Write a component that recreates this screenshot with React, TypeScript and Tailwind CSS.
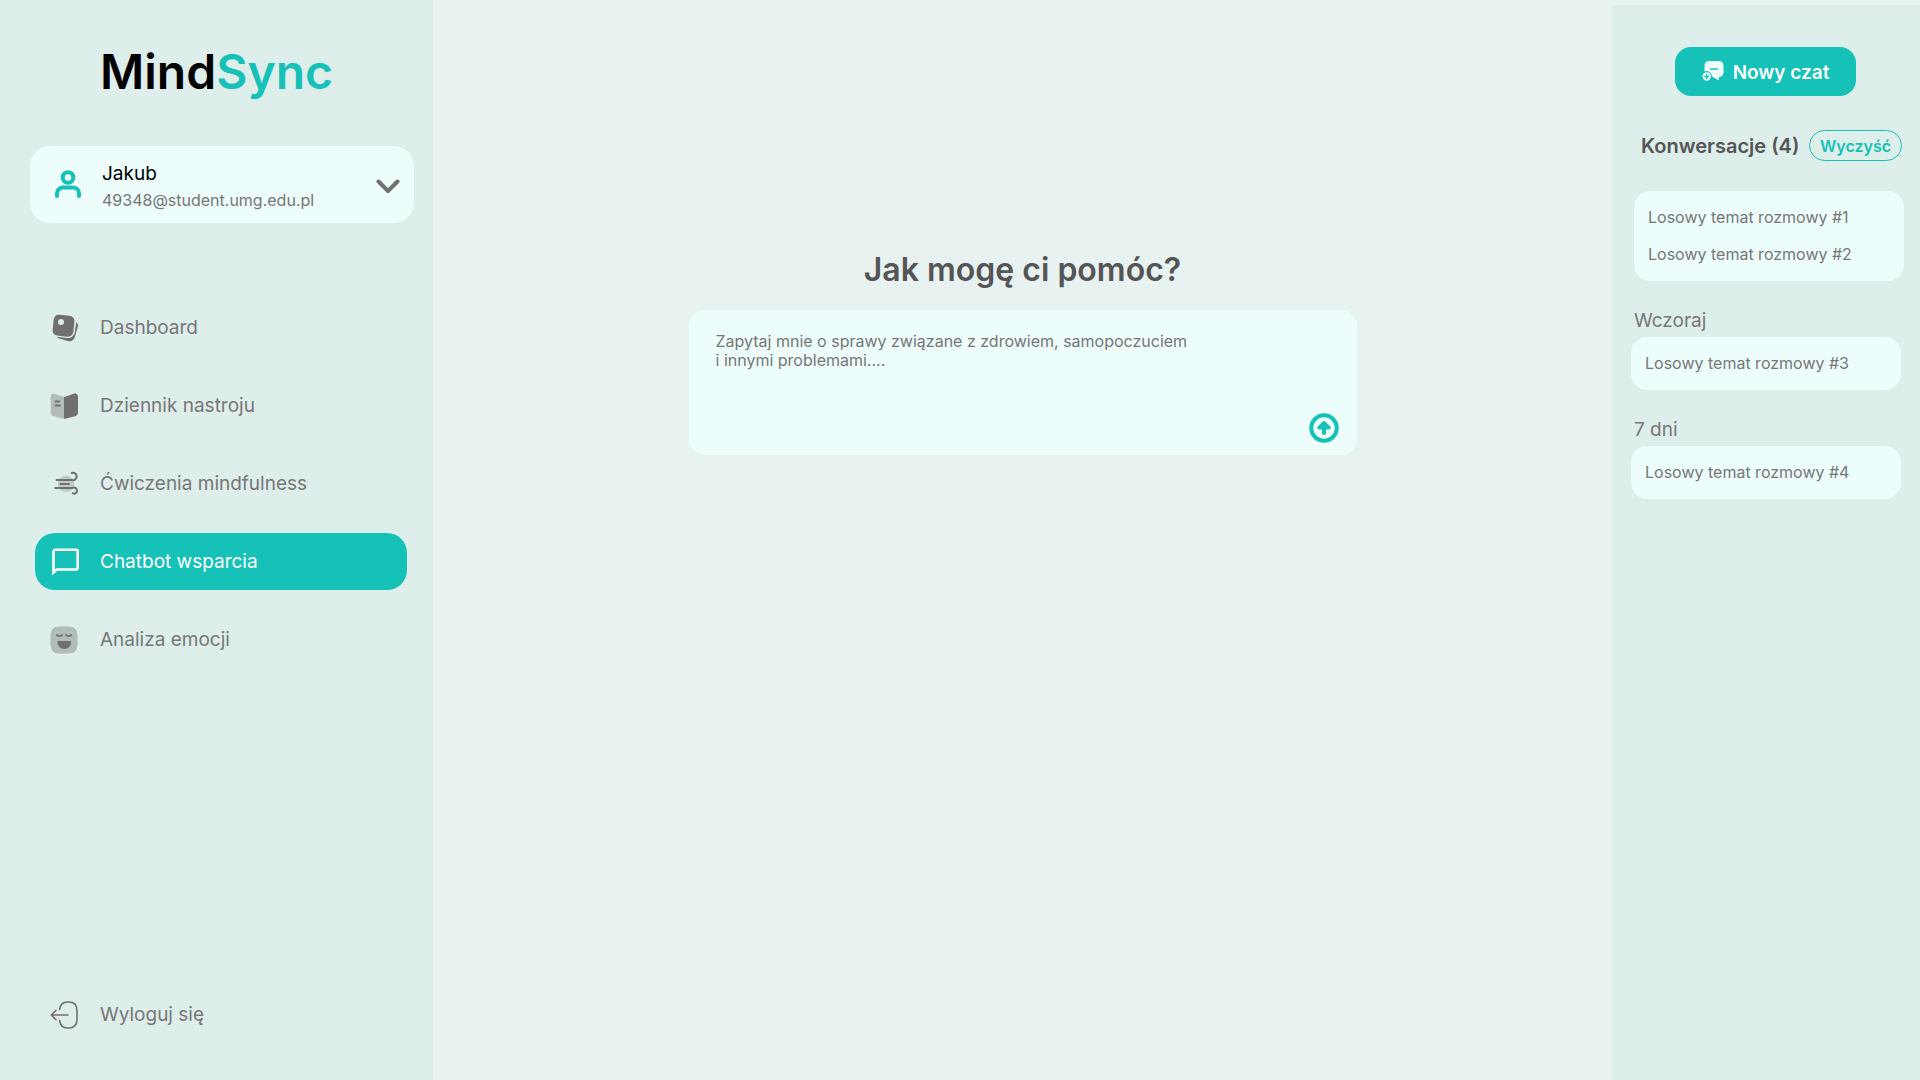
import type { ReactNode } from 'react';

function UserIcon() {
  return (
    <svg width="28" height="30" viewBox="0 0 28 30" fill="none" stroke="currentColor" strokeWidth="4" strokeLinecap="round" aria-hidden="true">
      <circle cx="14" cy="7.500" r="5.300" />
      <path d="M3 26v-2.500a6 6 0 0 1 6-6h10a6 6 0 0 1 6 6V26" />
    </svg>
  );
}

function ChevronIcon() {
  return (
    <svg width="24" height="15" viewBox="0 0 24 15" fill="none" stroke="currentColor" strokeWidth="4" strokeLinecap="round" strokeLinejoin="round" aria-hidden="true">
      <path d="M2.500 2.500 12 12l9.500-9.500" />
    </svg>
  );
}

function DashboardIcon() {
  return (
    <svg width="30" height="30" viewBox="0 0 30 30" fill="currentColor" aria-hidden="true">
      <path
        fillRule="evenodd"
        d="M9.800 1.700 19 2.700C22.500 3.100 24.700 5.200 24.400 8.500L23.500 17.800C23.100 21.800 20.900 24.100 17 23.700L8 22.700C4.200 22.300 2.300 20.200 2.700 16.600L3.600 7C4 3.200 6.300 1.300 9.800 1.700ZM11 6a3 3 0 1 0 0 6 3 3 0 0 0 0-6Z"
      />
      <path d="M26.300 9 27.800 11C28.200 12 28 13 27.700 14L25 23.500C23.900 27.300 21.500 29 17.500 28L10 25.800C8.700 25.400 7.500 24.700 6.600 23.800L16.500 25C21.700 25.500 24.400 22.800 25 17.800Z" />
    </svg>
  );
}

function JournalIcon() {
  return (
    <svg width="30" height="30" viewBox="0 0 30 30" fill="currentColor" aria-hidden="true">
      <path opacity="0.4" d="M14 6.200 5 3C2.200 2 .7 3.200.7 6v15.500c0 2 1 3 2.800 3.500L14 28Z" />
      <path d="M14 6.200 23.500 2.700C26.300 1.800 28 3 28 5.800v15.800c0 2-1 3.100-2.800 3.600L14 28Z" />
      <path fill="none" stroke="currentColor" strokeWidth="1.800" strokeLinecap="round" d="M5.500 10.500h3.600M5.500 14.500h4.500" />
    </svg>
  );
}

function WindIcon() {
  return (
    <svg width="30" height="30" viewBox="0 0 30 30" fill="none" stroke="currentColor" strokeWidth="2" strokeLinecap="round" aria-hidden="true">
      <circle cx="16" cy="15" r="8.200" fill="currentColor" stroke="none" opacity="0.28" />
      <path d="M6.500 11H22a3.700 3.700 0 1 0-.3-7M10.500 15h8.500M5.200 19H22.500a3 3 0 1 1 .2 5.300" />
    </svg>
  );
}

function ChatIcon() {
  return (
    <svg width="30" height="30" viewBox="0 0 30 30" fill="none" stroke="currentColor" strokeWidth="2.600" strokeLinejoin="miter" aria-hidden="true">
      <path d="M3.500 25.500V4.500A1.700 1.700 0 0 1 5.200 2.800H26A1.700 1.700 0 0 1 27.700 4.500v16.300a1.700 1.700 0 0 1-1.700 1.700H6.700Z" />
    </svg>
  );
}

function EmojiIcon() {
  return (
    <svg width="30" height="30" viewBox="0 0 30 30" fill="currentColor" aria-hidden="true">
      <rect x="0.500" y="1.500" width="27" height="27" rx="8" opacity="0.4" />
      <path d="M8.500 16h11.500c.8 0 1.200.5 1.200 1.200a6.900 6.900 0 0 1-13.800 0c0-.7.400-1.200 1.100-1.200Z" />
      <path fill="none" stroke="currentColor" strokeWidth="1.800" strokeLinecap="round" d="M6.800 10c1.800 1.500 3.600 1.500 5.400 0M16 10c1.800 1.500 3.600 1.500 5.400 0" />
    </svg>
  );
}

function LogoutIcon() {
  return (
    <svg width="30" height="30" viewBox="0 0 30 30" fill="none" stroke="currentColor" strokeWidth="1.600" strokeLinecap="round" strokeLinejoin="round" aria-hidden="true">
      <path d="M9.700 9.500C10.200 4 12.500 2 17.500 2h1c6 0 8.500 2.500 8.500 8.500v9c0 6-2.500 8.500-8.500 8.500h-1c-5 0-7.300-2-7.800-7.400M18 15H1.500M6 10.300 1.300 15 6 19.700" />
    </svg>
  );
}

function NewChatIcon() {
  return (
    <svg width="22" height="22" viewBox="0 1 22 22" fill="none" aria-hidden="true">
      <path fill="#ecfdfb" d="M7 1h10a4.500 4.500 0 0 1 4.500 4.500v7A4.500 4.500 0 0 1 17 17v2.300c0 .6-.6.900-1.100.6L9.500 16A5 5 0 0 0 2.500 11.500v-6A4.500 4.500 0 0 1 7 1Z" />
      <path stroke="#16c1b8" strokeWidth="1.600" strokeLinecap="round" d="M8.500 9h7" />
      <circle cx="4.700" cy="16.500" r="5" fill="#16c1b8" />
      <circle cx="4.700" cy="16.500" r="4.200" fill="#ecfdfb" />
      <path stroke="#16c1b8" strokeWidth="1.600" strokeLinecap="round" d="M4.700 14.800v3.400M3 16.500h3.400" />
    </svg>
  );
}

function SendIcon() {
  return (
    <svg width="30" height="30" viewBox="0 0 30 30" fill="none" stroke="currentColor" strokeWidth="4" strokeLinecap="round" strokeLinejoin="round" aria-hidden="true">
      <circle cx="15" cy="15" r="12.700" />
      <path d="M15 10.500V20" />
      <path strokeWidth="3.500" fill="currentColor" d="M10 14.800 15 9.800l5 5Z" />
    </svg>
  );
}

function NavItem({ icon, label, active = false }: { icon: ReactNode; label: string; active?: boolean }) {
  return (
    <a
      href="#"
      aria-current={active ? 'page' : undefined}
      className={
        active
          ? 'flex h-[57px] items-center gap-5 rounded-[20px] bg-[#16c1b8] px-[15px] text-[19px] leading-7 text-white'
          : 'flex h-[57px] items-center gap-5 rounded-[20px] px-[15px] text-[19px] leading-7 text-[#707070]'
      }
    >
      {icon}
      <span className={active ? 'text-white' : 'text-[#777777]'}>{label}</span>
    </a>
  );
}

function Group({ title, topic }: { title: string; topic: string }) {
  return (
    <section>
      <h3 className="ml-[3px] pt-0.5 text-[19px] leading-7 text-[#777777]">{title}</h3>
      <ul className="mt-0.5 rounded-2xl bg-[#ecfdfb] px-[14px] py-[14px]">
        <li><a href="#" className="block leading-[25px] text-[#777777]">{topic}</a></li>
      </ul>
    </section>
  );
}

export default function App() {
  return (
    <div className="flex min-h-screen bg-[#e8f2f1] font-['Inter',sans-serif]">
      <aside className="flex w-[433px] shrink-0 flex-col bg-[#deeeea] pb-[37px]">
        <h1 className="mt-[42px] text-center text-5xl leading-[60px] font-semibold text-black">
          Mind<span className="text-[#16c1b8]">Sync</span>
        </h1>
        <button type="button" className="mt-11 mr-[19px] ml-[30px] flex h-[77px] items-center rounded-[20px] bg-[#ecfdfb] pr-[14px] pl-6 text-left">
          <span className="text-[#16c1b8]"><UserIcon /></span>
          <span className="ml-5 flex-1">
            <span className="block pt-0.5 text-[19px] leading-7 text-black">Jakub</span>
            <span className="block text-base leading-6 text-[#777777]">49348@student.umg.edu.pl</span>
          </span>
          <span className="mt-1 text-[#707070]"><ChevronIcon /></span>
        </button>
        <nav className="mt-[76px] mr-[26px] ml-[35px] flex flex-1 flex-col gap-[21px]" aria-label="Menu">
          <NavItem icon={<DashboardIcon />} label="Dashboard" />
          <NavItem icon={<JournalIcon />} label="Dziennik nastroju" />
          <NavItem icon={<WindIcon />} label="Ćwiczenia mindfulness" />
          <NavItem icon={<ChatIcon />} label="Chatbot wsparcia" active />
          <NavItem icon={<EmojiIcon />} label="Analiza emocji" />
          <div className="mt-auto">
            <NavItem icon={<LogoutIcon />} label="Wyloguj się" />
          </div>
        </nav>
      </aside>

      <main className="flex flex-1 flex-col items-center px-8 pt-[250px]">
        <h2 className="text-[32px] leading-10 font-semibold text-[#555555]">Jak mogę ci pomóc?</h2>
        <form className="mt-5 flex w-full max-w-[668px] items-end rounded-2xl bg-[#ecfdfb] pt-[22px] pr-[18px] pb-3 pl-[27px]" onSubmit={(e) => e.preventDefault()}>
          <textarea
            aria-label="Wiadomość"
            className="h-[111px] min-w-0 flex-1 resize-none bg-transparent text-base leading-[19px] text-[#777777] outline-none placeholder:text-[#777777] placeholder:opacity-100"
            placeholder={'Zapytaj mnie o sprawy związane z zdrowiem, samopoczuciem\ni innymi problemami....'}
          />
          <button type="submit" aria-label="Wyślij" className="text-[#16c1b8]"><SendIcon /></button>
        </form>
      </main>

      <aside className="mt-[5px] w-[308px] shrink-0 bg-[#deeeea] pr-[18px] pl-[19px]">
        <button type="button" className="mt-[42px] ml-11 flex h-[49px] w-[181px] items-center justify-center gap-[9px] rounded-2xl bg-[#16c1b8] text-[19px] leading-7 font-semibold text-white">
          <NewChatIcon />
          <span className="pt-0.5">Nowy czat</span>
        </button>
        <div className="mt-[34px] flex items-center justify-between pl-[10px]">
          <h2 className="text-xl font-semibold whitespace-nowrap text-[#555555]">Konwersacje (4)</h2>
          <button type="button" className="h-[31px] rounded-full border border-[#16c1b8] px-[10px] text-base font-semibold text-[#16c1b8]">Wyczyść</button>
        </div>
        <ul className="-mr-[2px] ml-[3px] mt-[30px] flex flex-col gap-3 rounded-2xl bg-[#ecfdfb] px-[14px] py-[14px]">
          <li><a href="#" className="block leading-[25px] text-[#777777]">Losowy temat rozmowy #1</a></li>
          <li><a href="#" className="block leading-[25px] text-[#777777]">Losowy temat rozmowy #2</a></li>
        </ul>
        <div className="mt-6 flex flex-col gap-6 pr-px">
          <Group title="Wczoraj" topic="Losowy temat rozmowy #3" />
          <Group title="7 dni" topic="Losowy temat rozmowy #4" />
        </div>
      </aside>
    </div>
  );
}
